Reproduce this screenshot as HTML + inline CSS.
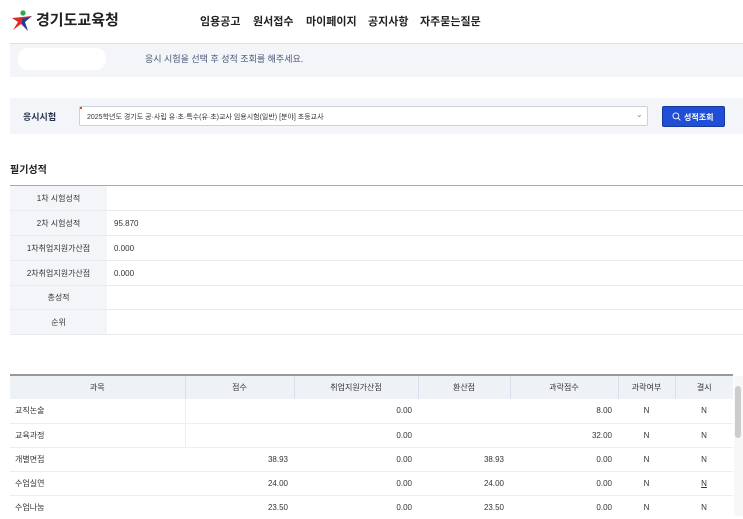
<!DOCTYPE html>
<html><head><meta charset="utf-8"><style>
*{margin:0;padding:0;box-sizing:border-box}
body{width:743px;height:516px;overflow:hidden;background:#fff;font-family:"Liberation Sans","Noto Sans CJK KR",sans-serif;color:#333;position:relative}
.a{position:absolute}
.nav span{position:absolute;top:13px;font-size:11px;font-weight:bold;color:#222}
table{border-collapse:collapse;position:absolute;font-size:8px}
td,th{font-weight:normal}
</style></head><body>
<svg class="a" style="left:10px;top:9px" width="24" height="24" viewBox="0 0 24 24">
<circle cx="13" cy="4" r="2.6" fill="#2aa84a"/>
<path d="M2 9 L22 7 L14 12 L18 22 L11 15 L3 21 L8 13 Z" fill="#e02a2a"/>
<path d="M12 10 L22 7 L15 13 L18 22 L12 15Z" fill="#1d3f99"/>
</svg>
<div class="a" style="left:36px;top:9px;font-size:15px;font-weight:bold;color:#222">경기도교육청</div>
<div class="nav"><span style="left:200px">임용공고</span><span style="left:253px">원서접수</span><span style="left:306px">마이페이지</span><span style="left:368px">공지사항</span><span style="left:420px">자주묻는질문</span></div>
<div class="a" style="left:10px;top:43px;width:733px;height:1px;background:#dde1e7"></div>
<div class="a" style="left:10px;top:44px;width:733px;height:33px;background:#f3f5f8"></div>
<div class="a" style="left:18px;top:48px;width:88px;height:22px;background:#fff;border-radius:10px"></div>
<div class="a" style="left:145px;top:52px;font-size:9px;color:#4a5878">응시 시험을 선택 후 성적 조회를 해주세요.</div>
<div class="a" style="left:10px;top:98px;width:733px;height:36px;background:#f3f5f8"></div>
<div class="a" style="left:23px;top:110px;font-size:9px;font-weight:bold;color:#2a3550">응시시험</div>
<div class="a" style="left:79px;top:106px;width:569px;height:20px;background:#fff;border:1px solid #ccd1d8;border-radius:2px;font-size:7px;color:#333;padding:5px 0 0 7px">2025학년도 경기도 공·사립 유·초·특수(유·초)교사 임용시험(일반) [분야] 초등교사</div>
<div class="a" style="left:80px;top:107px;width:2px;height:2px;background:#e33"></div>
<div class="a" style="left:636px;top:110px;font-size:8px;color:#888">⌄</div>
<div class="a" style="left:662px;top:106px;width:63px;height:21px;background:#1f4fd6;border:1px solid #17399e;border-radius:2px;color:#fff;font-size:8px;font-weight:bold;padding:5px 0 0 9px">
<svg width="9" height="9" viewBox="0 0 10 10" style="vertical-align:-1px;margin-right:3px"><circle cx="4.3" cy="4.3" r="3.3" fill="none" stroke="#fff" stroke-width="1"/><path d="M6.8 6.8 L9.3 9.3" stroke="#fff" stroke-width="1"/></svg>성적조회</div>
<div class="a" style="left:10px;top:161px;font-size:10px;font-weight:bold;color:#222">필기성적</div>
<table style="left:10px;top:185px;width:733px;border-top:1px solid #aaa">
<tr style="height:25px"><td style="width:97px;background:#f3f5f8;text-align:center;border-bottom:1px solid #e8eaee">1차 시험성적</td><td style="padding-left:7px;border-bottom:1px solid #e8eaee"></td></tr>
<tr style="height:25px"><td style="background:#f3f5f8;text-align:center;border-bottom:1px solid #e8eaee">2차 시험성적</td><td style="padding-left:7px;border-bottom:1px solid #e8eaee">95.870</td></tr>
<tr style="height:25px"><td style="background:#f3f5f8;text-align:center;border-bottom:1px solid #e8eaee">1차취업지원가산점</td><td style="padding-left:7px;border-bottom:1px solid #e8eaee">0.000</td></tr>
<tr style="height:25px"><td style="background:#f3f5f8;text-align:center;border-bottom:1px solid #e8eaee">2차취업지원가산점</td><td style="padding-left:7px;border-bottom:1px solid #e8eaee">0.000</td></tr>
<tr style="height:24px"><td style="background:#f3f5f8;text-align:center;border-bottom:1px solid #e8eaee">총성적</td><td style="border-bottom:1px solid #e8eaee"></td></tr>
<tr style="height:25px"><td style="background:#f3f5f8;text-align:center;border-bottom:1px solid #e8eaee">순위</td><td style="border-bottom:1px solid #e8eaee"></td></tr>
</table>
<table style="left:10px;top:374px;width:723px;border-top:2px solid #999;text-align:right">
<tr style="height:24px;background:#eef1f5;text-align:center"><th style="width:175px">과목</th><th style="width:109px;border-left:1px solid #dde">점수</th><th style="width:124px;border-left:1px solid #dde">취업지원가산점</th><th style="width:92px;border-left:1px solid #dde">환산점</th><th style="width:108px;border-left:1px solid #dde">과락점수</th><th style="width:57px;border-left:1px solid #dde">과락여부</th><th style="border-left:1px solid #dde">결시</th></tr>
<tr style="height:24px;border-bottom:1px solid #eee"><td style="text-align:left;padding-left:5px">교직논술</td><td style="border-left:1px solid #eee"></td><td style="padding-right:6px">0.00</td><td></td><td style="padding-right:6px">8.00</td><td style="text-align:center">N</td><td style="text-align:center">N</td></tr>
<tr style="height:24px;border-bottom:1px solid #eee"><td style="text-align:left;padding-left:5px">교육과정</td><td style="border-left:1px solid #eee"></td><td style="padding-right:6px">0.00</td><td></td><td style="padding-right:6px">32.00</td><td style="text-align:center">N</td><td style="text-align:center">N</td></tr>
<tr style="height:24px;border-bottom:1px solid #eee"><td style="text-align:left;padding-left:5px">개별면접</td><td style="padding-right:6px">38.93</td><td style="padding-right:6px">0.00</td><td style="padding-right:6px">38.93</td><td style="padding-right:6px">0.00</td><td style="text-align:center">N</td><td style="text-align:center">N</td></tr>
<tr style="height:24px;border-bottom:1px solid #eee"><td style="text-align:left;padding-left:5px">수업실연</td><td style="padding-right:6px">24.00</td><td style="padding-right:6px">0.00</td><td style="padding-right:6px">24.00</td><td style="padding-right:6px">0.00</td><td style="text-align:center">N</td><td style="text-align:center;text-decoration:underline">N</td></tr>
<tr style="height:24px"><td style="text-align:left;padding-left:5px">수업나눔</td><td style="padding-right:6px">23.50</td><td style="padding-right:6px">0.00</td><td style="padding-right:6px">23.50</td><td style="padding-right:6px">0.00</td><td style="text-align:center">N</td><td style="text-align:center">N</td></tr>
</table>
<div class="a" style="left:734px;top:376px;width:9px;height:140px;background:#f7f7f7"></div>
<div class="a" style="left:735px;top:386px;width:6px;height:52px;background:#ccc;border-radius:3px"></div>
</body></html>
